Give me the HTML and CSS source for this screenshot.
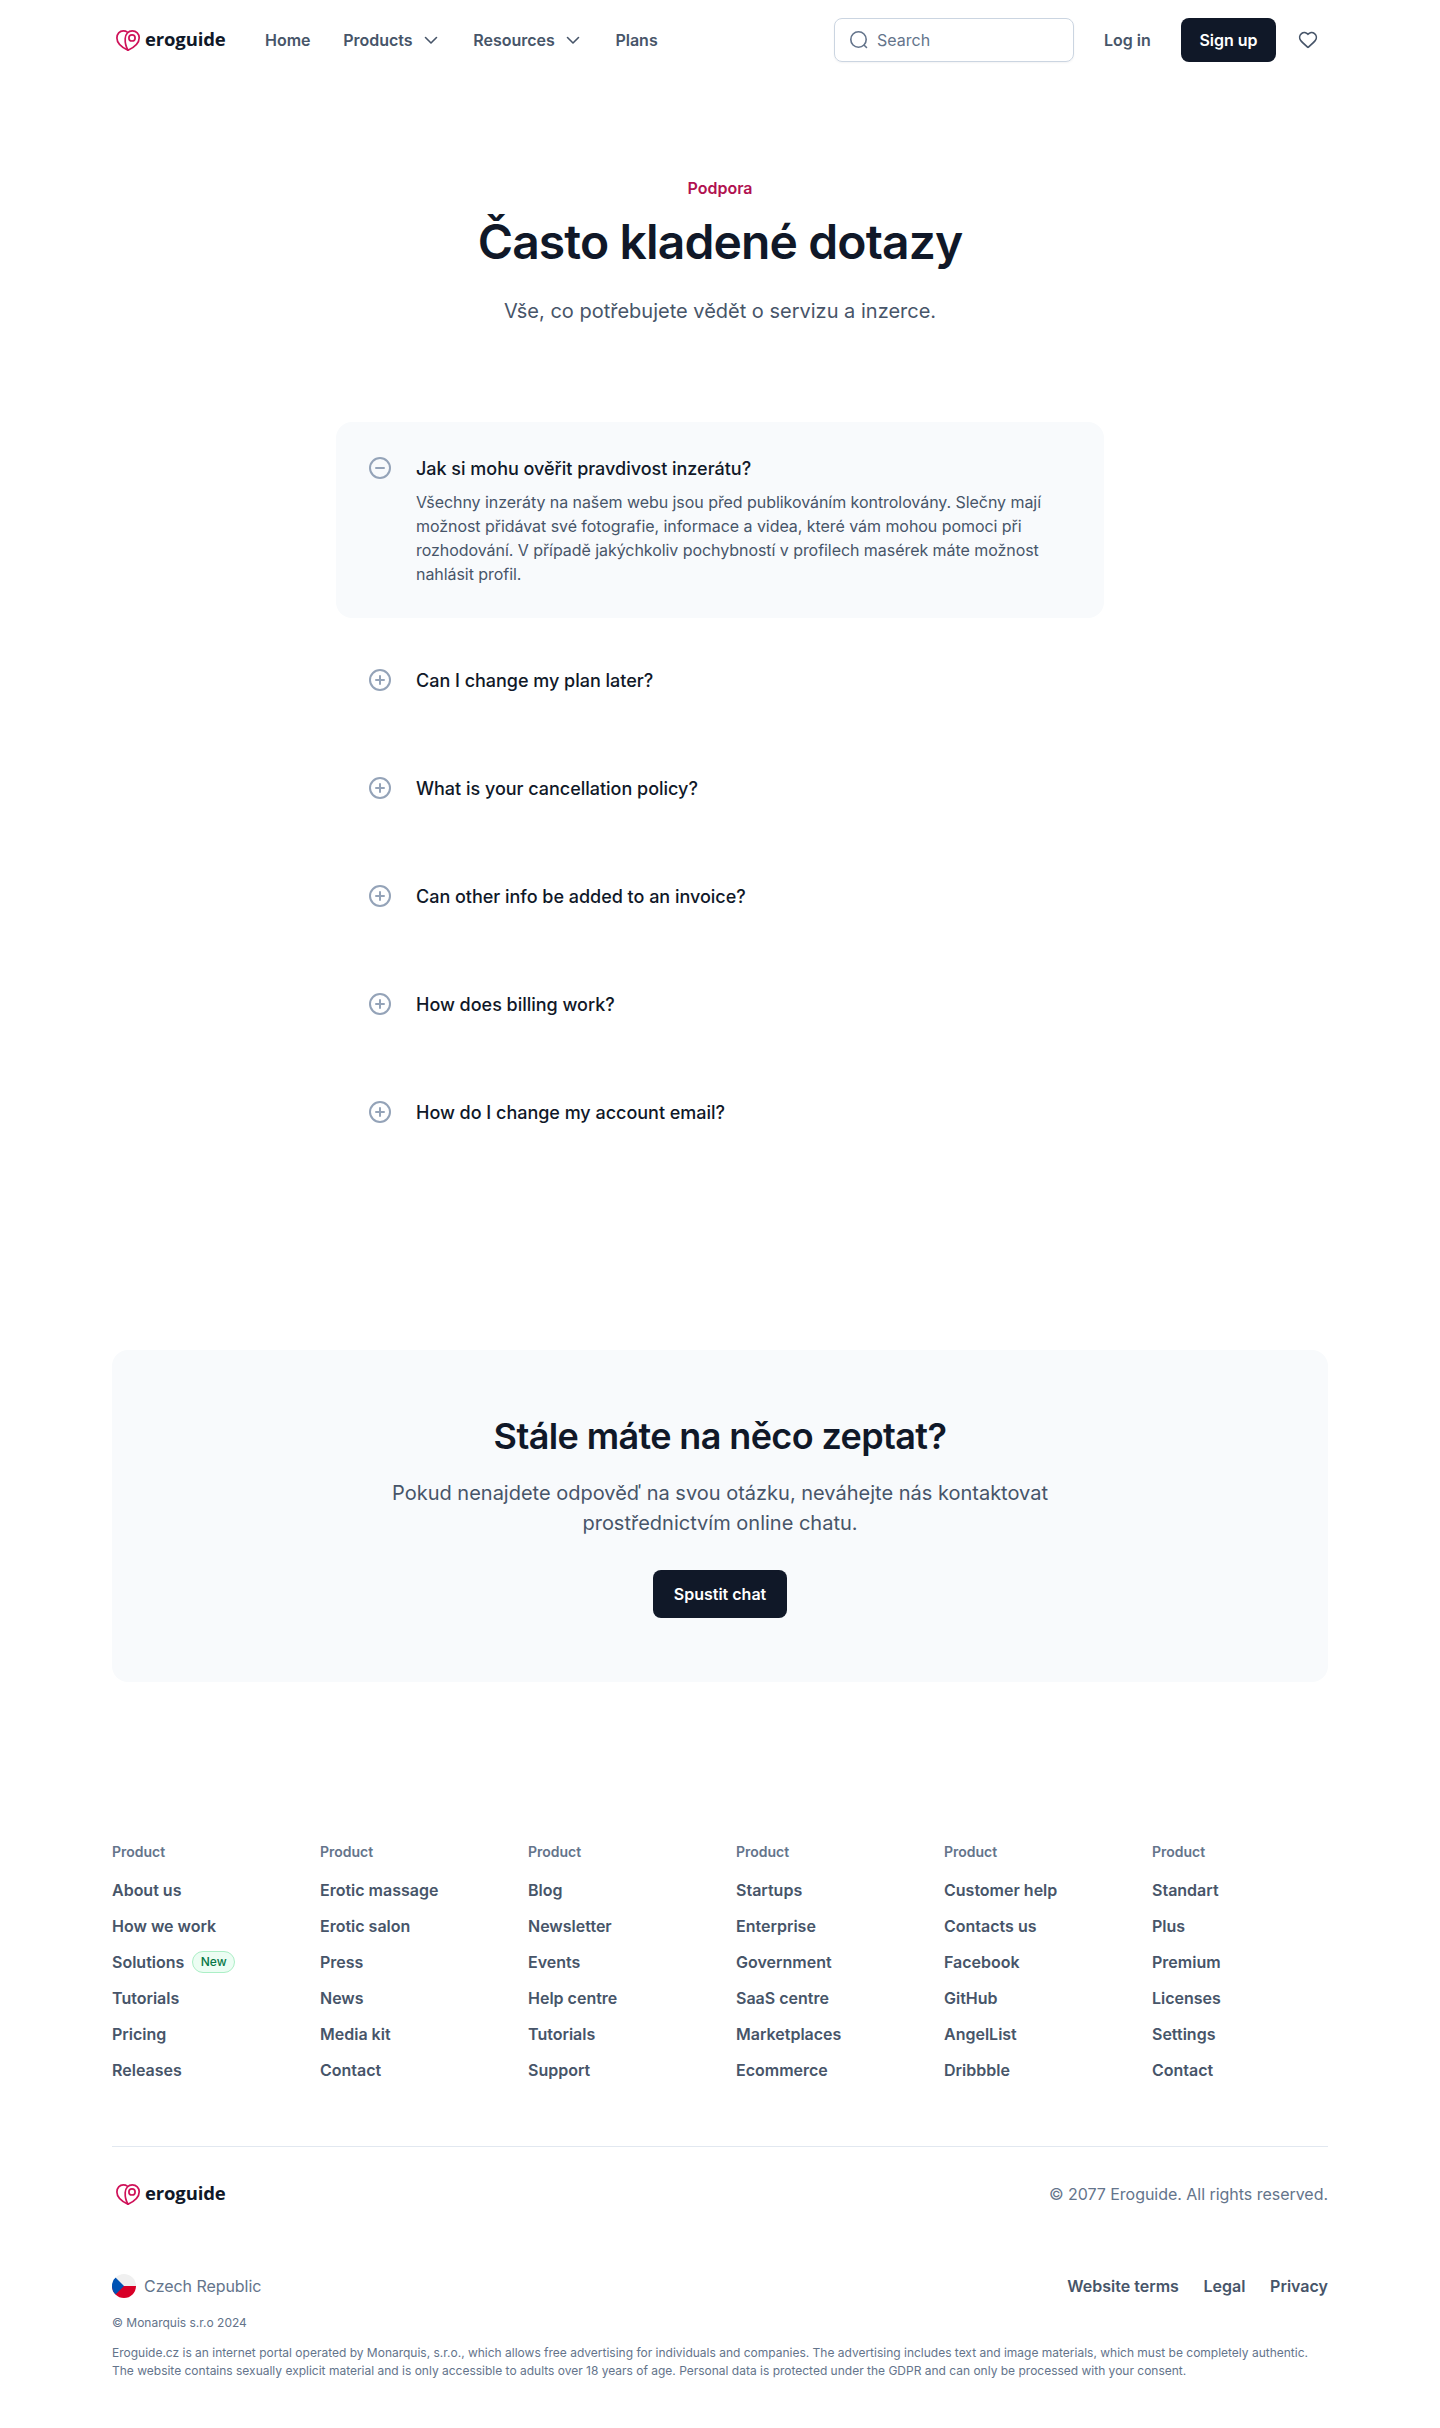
FILE: index.html
```html
<!DOCTYPE html>
<html lang="cs">
<head>
<meta charset="utf-8">
<title>Eroguide – Často kladené dotazy</title>
<link rel="stylesheet" href="styles.css">
</head>
<body>
<svg width="0" height="0" class="sprite" aria-hidden="true">
  <symbol id="logo" viewBox="0 0 32 32">
    <g fill="none" stroke="#cf1259" stroke-width="1.7" stroke-linecap="round" stroke-linejoin="round">
      <path d="M16 26.200C10 23.400 4.900 18.900 4.900 13.900C4.900 10 7.600 6.900 11.300 6.900C12.700 6.900 14.100 7.200 15.300 8.100"/>
      <path d="M16 26.200C13.900 22.800 13 18.300 13.200 14.500C13.400 10 16.400 6.900 20.300 6.900C24.300 6.900 27.200 9.900 27.200 13.700C27.200 19 22.300 23.300 16 26.200Z"/>
      <circle cx="20" cy="13.900" r="3.100"/>
    </g>
  </symbol>
  <symbol id="chevron" viewBox="0 0 20 20"><path d="M4.500 7.500 10 13l5.500-5.500" fill="none" stroke="currentColor" stroke-width="1.600" stroke-linecap="round" stroke-linejoin="round"/></symbol>
  <symbol id="plus" viewBox="0 0 24 24"><path d="M12 8v8M8 12h8M22 12a10 10 0 1 1-20 0 10 10 0 0 1 20 0Z" fill="none" stroke="currentColor" stroke-width="2" stroke-linecap="round" stroke-linejoin="round"/></symbol>
  <symbol id="minus" viewBox="0 0 24 24"><path d="M8 12h8M22 12a10 10 0 1 1-20 0 10 10 0 0 1 20 0Z" fill="none" stroke="currentColor" stroke-width="2" stroke-linecap="round" stroke-linejoin="round"/></symbol>
</svg>

<header class="header container">
  <a class="logo"><svg class="mark"><use href="#logo"/></svg><span>eroguide</span></a>
  <nav class="nav">
    <a>Home</a>
    <a>Products <svg class="chev"><use href="#chevron"/></svg></a>
    <a>Resources <svg class="chev"><use href="#chevron"/></svg></a>
    <a>Plans</a>
  </nav>
  <div class="search">
    <svg width="20" height="20" viewBox="0 0 20 20" fill="none" stroke="currentColor" stroke-width="1.600" stroke-linecap="round"><circle cx="9.500" cy="9.500" r="7.700"/><path d="m15.200 15.200 2.300 2.300"/></svg>
    <span>Search</span>
  </div>
  <a class="login">Log in</a>
  <a class="btn btn-sm">Sign up</a>
  <svg class="heart" width="20" height="20" viewBox="0 0 20 20" fill="none" stroke="currentColor" stroke-width="1.660" stroke-linejoin="round"><path d="M9.994 4.280C8.330 2.330 5.550 1.810 3.460 3.590 1.380 5.370 1.080 8.350 2.720 10.450c1.360 1.750 5.480 5.440 6.830 6.630.15.130.23.200.31.230a.4.400 0 0 0 .27 0c.08-.03.16-.1.310-.23 1.350-1.190 5.470-4.880 6.830-6.630 1.640-2.100 1.380-5.100-.74-6.860-2.120-1.760-4.870-1.260-6.536.690Z"/></svg>
</header>

<main>
  <section class="hero">
    <p class="eyebrow">Podpora</p>
    <h1>Často kladené dotazy</h1>
    <p class="lead">Vše, co potřebujete vědět o servizu a inzerce.</p>
  </section>

  <section class="faq">
    <article class="item open">
      <svg class="toggle"><use href="#minus"/></svg>
      <div>
        <h3>Jak si mohu ověřit pravdivost inzerátu?</h3>
        <p>Všechny inzeráty na našem webu jsou před publikováním kontrolovány. Slečny mají<br>možnost přidávat své fotografie, informace a videa, které vám mohou pomoci při<br>rozhodování. V případě jakýchkoliv pochybností v profilech masérek máte možnost<br>nahlásit profil.</p>
      </div>
    </article>
    <article class="item"><svg class="toggle"><use href="#plus"/></svg><h3>Can I change my plan later?</h3></article>
    <article class="item"><svg class="toggle"><use href="#plus"/></svg><h3>What is your cancellation policy?</h3></article>
    <article class="item"><svg class="toggle"><use href="#plus"/></svg><h3>Can other info be added to an invoice?</h3></article>
    <article class="item"><svg class="toggle"><use href="#plus"/></svg><h3>How does billing work?</h3></article>
    <article class="item"><svg class="toggle"><use href="#plus"/></svg><h3>How do I change my account email?</h3></article>
  </section>

  <section class="cta container">
    <h2>Stále máte na něco zeptat?</h2>
    <p>Pokud nenajdete odpověď na svou otázku, neváhejte nás kontaktovat<br>prostřednictvím online chatu.</p>
    <a class="btn btn-lg">Spustit chat</a>
  </section>
</main>

<footer class="footer container">
  <div class="columns">
    <div class="col"><h4>Product</h4><a>About us</a><a>How we work</a><a>Solutions <span class="badge">New</span></a><a>Tutorials</a><a>Pricing</a><a>Releases</a></div>
    <div class="col"><h4>Product</h4><a>Erotic massage</a><a>Erotic salon</a><a>Press</a><a>News</a><a>Media kit</a><a>Contact</a></div>
    <div class="col"><h4>Product</h4><a>Blog</a><a>Newsletter</a><a>Events</a><a>Help centre</a><a>Tutorials</a><a>Support</a></div>
    <div class="col"><h4>Product</h4><a>Startups</a><a>Enterprise</a><a>Government</a><a>SaaS centre</a><a>Marketplaces</a><a>Ecommerce</a></div>
    <div class="col"><h4>Product</h4><a>Customer help</a><a>Contacts us</a><a>Facebook</a><a>GitHub</a><a>AngelList</a><a>Dribbble</a></div>
    <div class="col"><h4>Product</h4><a>Standart</a><a>Plus</a><a>Premium</a><a>Licenses</a><a>Settings</a><a>Contact</a></div>
  </div>
  <div class="brand-row">
    <a class="logo"><svg class="mark"><use href="#logo"/></svg><span>eroguide</span></a>
    <span class="copyright">© 2077 Eroguide. All rights reserved.</span>
  </div>
  <div class="legal-row">
    <div class="country">
      <svg width="24" height="24" viewBox="0 0 24 24"><clipPath id="disc"><circle cx="12" cy="12" r="12"/></clipPath><g clip-path="url(#disc)"><path fill="#f0f0f0" d="M0 0h24v12H0z"/><path fill="#d80027" d="M0 12h24v12H0z"/><path fill="#0052b4" d="M3.500 3.500 12 12l-8.500 8.500L-6 12z"/></g></svg>
      <span>Czech Republic</span>
    </div>
    <nav class="legal"><a>Website terms</a><a>Legal</a><a>Privacy</a></nav>
  </div>
  <p class="fine">© Monarquis s.r.o 2024</p>
  <p class="fine">Eroguide.cz is an internet portal operated by Monarquis, s.r.o., which allows free advertising for individuals and companies. The advertising includes text and image materials, which must be completely authentic.<br>The website contains sexually explicit material and is only accessible to adults over 18 years of age. Personal data is protected under the GDPR and can only be processed with your consent.</p>
</footer>
</body>
</html>
```
FILE: styles.css
```css
* { box-sizing: border-box; margin: 0; padding: 0; }
body { font-family: Inter, "Liberation Sans", sans-serif; font-size: 16px; line-height: 24px; color: #475569; background: #fff; }
svg { display: block; flex: none; }
.sprite { position: absolute; }
.container { width: 1216px; margin: 0 auto; }

.header { height: 80px; display: flex; align-items: center; }
.logo { width: 116px; height: 32px; display: flex; align-items: center; font: 700 18.5px/32px "Open Sans", "Noto Sans", sans-serif; letter-spacing: -0.15px; color: #101828; }
.logo span { margin-left: 1px; padding-bottom: 2px; }
.mark { width: 32px; height: 32px; }
.nav { display: flex; gap: 32.6px; margin-left: 37px; font-weight: 600; }
.nav a { display: flex; align-items: center; gap: 8px; }
.chev { width: 20px; height: 20px; }
.search { width: 240px; height: 44px; margin-left: auto; padding: 0 14px; display: flex; align-items: center; gap: 8px; border: 1px solid #cbd5e1; border-radius: 8px; color: #64748b; box-shadow: 0 1px 2px rgba(16, 24, 40, .05); }
.login { width: 47px; margin-left: 30px; font-weight: 600; white-space: nowrap; }
.btn { display: flex; align-items: center; justify-content: center; background: #101828; color: #fff; font-weight: 600; border-radius: 8px; }
.btn-sm { width: 95px; height: 44px; margin-left: 30px; }
.btn-lg { width: 134px; height: 48px; margin: 32px auto 0; }
.heart { margin: 0 10px 0 22px; }

.hero { padding: 96px 0; text-align: center; }
.eyebrow { font-weight: 600; color: #b11150; }
h1 { margin-top: 12px; font-size: 48px; line-height: 60px; font-weight: 600; letter-spacing: -0.87px; color: #101828; }
.lead { margin-top: 24px; font-size: 20px; line-height: 30px; }

.faq { width: 768px; margin: 0 auto; padding-bottom: 192px; display: flex; flex-direction: column; gap: 16px; }
.item { display: flex; gap: 24px; padding: 32px; border-radius: 16px; }
.open { background: #f8fafc; }
.toggle { width: 24px; height: 24px; margin-top: 2px; color: #94a3b8; }
h3 { padding-top: 1px; font-size: 18px; line-height: 27px; font-weight: 500; letter-spacing: -0.02px; color: #101828; }
.item p { margin-top: 8px; letter-spacing: -0.055px; white-space: nowrap; }

.cta { padding: 64px 0; background: #f8fafc; border-radius: 16px; text-align: center; }
h2 { font-size: 36px; line-height: 44px; font-weight: 600; letter-spacing: -0.62px; color: #101828; }
.cta p { margin-top: 20px; font-size: 20px; line-height: 30px; }

.footer { padding: 160px 0 48px; }
.columns { display: grid; grid-template-columns: repeat(6, 1fr); gap: 32px; }
.col { display: flex; flex-direction: column; gap: 12px; font-weight: 600; }
.col h4 { margin-bottom: 4px; font-size: 14px; line-height: 20px; font-weight: 600; color: #64748b; }
.col a { display: flex; align-items: center; gap: 8px; height: 24px; }
.badge { height: 22px; padding: 0 7.5px; display: flex; align-items: center; border: 1px solid #abefc6; border-radius: 11px; background: #ecfdf3; color: #067647; font-size: 12px; line-height: 18px; font-weight: 500; }
.brand-row { margin-top: 64px; padding-top: 31px; border-top: 1px solid #e2e8f0; display: flex; justify-content: space-between; align-items: center; color: #64748b; }
.copyright { letter-spacing: -0.03px; }
.legal-row { margin-top: 64px; display: flex; justify-content: space-between; align-items: center; color: #64748b; }
.country { display: flex; gap: 8px; letter-spacing: -0.05px; }
.legal { display: flex; gap: 24.7px; font-weight: 600; color: #475569; }
.fine { margin-top: 12px; font-size: 12px; line-height: 18px; letter-spacing: -0.005px; color: #64748b; white-space: nowrap; }
.legal-row + .fine { margin-top: 16px; }
```
